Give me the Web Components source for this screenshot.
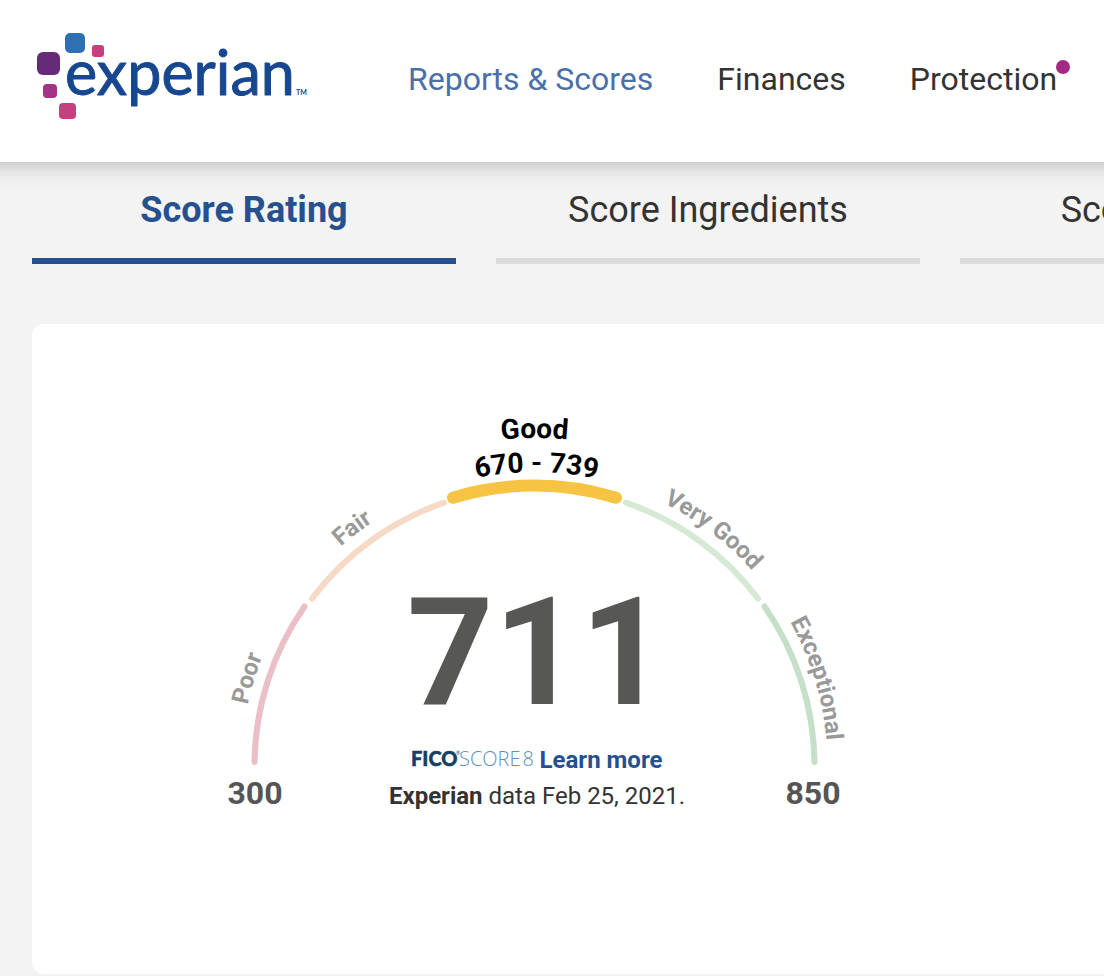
<!DOCTYPE html>
<html lang="en">
<head>
<meta charset="utf-8">
<meta name="viewport" content="width=device-width, initial-scale=1">
<title>Experian - Reports &amp; Scores</title>
<style>
  body {
    margin: 0;
    min-height: 100vh;
    overflow-x: hidden;
    background: #f3f3f3;
    color: #333;
    font-family: Roboto, "Liberation Sans", sans-serif;
  }
</style>
</head>
<body>
<site-header>
  <nav-link href="#reports" current>Reports &amp; Scores</nav-link>
  <nav-link href="#finances">Finances</nav-link>
  <nav-link href="#protection" alert>Protection</nav-link>
</site-header>
<main>
  <tab-strip>
    <tab-item selected>Score Rating</tab-item>
    <tab-item>Score Ingredients</tab-item>
    <tab-item>Score Planner</tab-item>
  </tab-strip>
  <score-card>
    <score-gauge score="711" min="300" max="850">
      <score-source><b>Experian</b> data Feb 25, 2021.</score-source>
    </score-gauge>
  </score-card>
</main>

<script>
class BrandLogo extends HTMLElement {
  constructor() {
    super();
    this.attachShadow({ mode: "open" });
  }

  connectedCallback() {
    this.shadowRoot.innerHTML = `
      <style>
        :host { display: block; flex: none; }
        a, svg { display: block; }
        text { font-family: Lato, "Liberation Sans", sans-serif; fill: #17478f; }
        .word { font-size: 61px; stroke: #17478f; stroke-width: 1; stroke-linejoin: round; }
        .tm { font-size: 7px; font-weight: bold; }
      </style>
      <a href="#home" aria-label="Experian home">
        <svg width="272" height="88" viewBox="0 0 272 88">
          <rect x="29" y="1" width="20" height="20" rx="5" fill="#2e70b4"/>
          <rect x="56" y="13" width="12" height="12" rx="3" fill="#c83f80"/>
          <rect x="1" y="20" width="23" height="23" rx="6" fill="#672a79"/>
          <rect x="7" y="52" width="14" height="14" rx="4" fill="#a33385"/>
          <rect x="23" y="71" width="17" height="16" rx="4" fill="#c83f80"/>
          <text class="word" x="29" y="63">experian</text>
          <text class="tm" x="260" y="63">TM</text>
        </svg>
      </a>
    `;
  }
}

class NavLink extends HTMLElement {
  constructor() {
    super();
    this.attachShadow({ mode: "open" });
  }

  connectedCallback() {
    this.shadowRoot.innerHTML = `
      <style>
        :host { display: block; position: relative; flex: none; }
        a { display: block; color: #333; font-size: 32px; line-height: 40px; text-decoration: none; white-space: nowrap; }
        :host([current]) a { color: #4a6fa9; }
        .dot {
          position: absolute;
          top: 1px;
          right: -13px;
          width: 14px;
          height: 14px;
          border-radius: 50%;
          background: #a22a82;
        }
        :host(:not([alert])) .dot { display: none; }
      </style>
      <a href="${this.getAttribute("href")}"><slot></slot></a>
      <span class="dot"></span>
    `;
  }
}

class SiteHeader extends HTMLElement {
  constructor() {
    super();
    this.attachShadow({ mode: "open" });
  }

  connectedCallback() {
    this.shadowRoot.innerHTML = `
      <style>
        :host { display: block; position: relative; }
        header {
          display: flex;
          gap: 100px;
          padding: 32px 36px 42px;
          background: #fff;
        }
        /* full-width shadow that does not fade at the sides */
        header::after {
          content: "";
          position: absolute;
          top: 100%;
          left: 0;
          right: 0;
          height: 28px;
          background: linear-gradient(rgba(0, 0, 0, .15), rgba(0, 0, 0, .06) 35%, rgba(0, 0, 0, .01) 75%, transparent);
          pointer-events: none;
        }
        nav { display: flex; gap: 64px; padding-top: 27px; }
      </style>
      <header>
        <brand-logo></brand-logo>
        <nav><slot></slot></nav>
      </header>
    `;
  }
}

class TabItem extends HTMLElement {
  constructor() {
    super();
    this.attachShadow({ mode: "open" });
  }

  connectedCallback() {
    this.shadowRoot.innerHTML = `
      <style>
        :host { display: block; flex: 0 0 424px; }
        button {
          width: 100%;
          padding: 24px 0;
          border: 0;
          border-bottom: 6px solid #dcdcdc;
          background: none;
          color: #333;
          font: 36px/48px Roboto, "Liberation Sans", sans-serif;
        }
        :host([selected]) button { border-color: #26508f; color: #26508f; font-weight: bold; }
      </style>
      <button role="tab" aria-selected="${this.hasAttribute("selected")}"><slot></slot></button>
    `;
  }
}

class TabStrip extends HTMLElement {
  constructor() {
    super();
    this.attachShadow({ mode: "open" });
  }

  connectedCallback() {
    this.shadowRoot.innerHTML = `
      <style>
        :host { display: block; }
        div { display: flex; gap: 40px; padding-left: 32px; overflow: hidden; }
      </style>
      <div role="tablist"><slot></slot></div>
    `;
  }
}

class ScoreCard extends HTMLElement {
  constructor() {
    super();
    this.attachShadow({ mode: "open" });
  }

  connectedCallback() {
    this.shadowRoot.innerHTML = `
      <style>
        :host { display: block; margin: 60px 0 0 32px; }
        section {
          display: flex;
          justify-content: center;
          padding: 80px 67px 150px 0;
          border-radius: 12px 0 0 12px;
          background: #fff;
        }
      </style>
      <section><slot></slot></section>
    `;
  }
}

class FicoMark extends HTMLElement {
  constructor() {
    super();
    this.attachShadow({ mode: "open" });
  }

  connectedCallback() {
    this.shadowRoot.innerHTML = `
      <style>
        :host { display: block; }
        svg { display: block; }
        .fico { font: 900 20px Lato, sans-serif; fill: #173f5f; stroke: #173f5f; stroke-width: .5; }
        .score { font: 300 20px "Open Sans", sans-serif; fill: #5f8fbd; }
        .reg { font: 5px Lato, sans-serif; fill: #173f5f; }
      </style>
      <svg width="124" height="32" viewBox="0 0 124 32">
        <text class="fico" x="-1" y="22">FICO</text>
        <text class="reg" x="44" y="11">®</text>
        <text class="score" x="47" y="22">SCORE<tspan dx="2">8</tspan></text>
      </svg>
    `;
  }
}

class ScoreSource extends HTMLElement {
  constructor() {
    super();
    this.attachShadow({ mode: "open" });
  }

  connectedCallback() {
    this.shadowRoot.innerHTML = `
      <style>
        :host { display: block; font-size: 24px; line-height: 36px; white-space: nowrap; }
      </style>
      <slot></slot>
    `;
  }
}

class ScoreGauge extends HTMLElement {
  constructor() {
    super();
    this.attachShadow({ mode: "open" });
  }

  connectedCallback() {
    this.shadowRoot.innerHTML = `
      <style>
        :host { display: grid; justify-items: center; }
        svg, .reading { grid-area: 1 / 1; }
        svg { display: block; }
        .band { fill: none; stroke-width: 6; stroke-linecap: round; }
        .band.active { stroke-width: 12; }
        text { font-weight: bold; text-anchor: middle; }
        .label { font-size: 24px; fill: #999; }
        .current { font-size: 28px; fill: #000; }
        .limit { font-size: 32px; fill: #555; }
        .reading {
          display: flex;
          flex-direction: column;
          align-items: center;
          align-self: end;
          padding: 0 0 10px 5px;
        }
        .score { margin-bottom: 13px; color: #575756; font-size: 151px; font-weight: bold; line-height: 152px; }
        .product { display: flex; align-items: center; gap: 4px; }
        .product a { color: #26508f; font-size: 24px; font-weight: bold; line-height: 36px; text-decoration: none; }
      </style>
      <svg width="641" height="420" viewBox="0 0 641 420">
        <defs>
          <path id="inner" d="M28.5 361A292 292 0 0 1 612.5 361"/>
          <path id="range" d="M27.5 361A293 293 0 0 1 613.5 361"/>
          <path id="outer" d="M-6.5 361A327 327 0 0 1 647.5 361"/>
        </defs>
        <path class="band" stroke="#ebbfc8" d="M40.5 358A280 280 0 0 1 90.5 202.5"/>
        <path class="band" stroke="#f7dac5" d="M98 194.5A278 278 0 0 1 230 98.7"/>
        <path class="band active" stroke="#f6c342" d="M239 93.7A280 280 0 0 1 402 93.7"/>
        <path class="band" stroke="#d5e9d4" d="M412 98.7A278 278 0 0 1 544 194.5"/>
        <path class="band" stroke="#c5dfc9" d="M550.5 202.5A280 280 0 0 1 600.5 358"/>
        <text class="label"><textPath href="#range" startOffset="86">Poor</textPath></text>
        <text class="label"><textPath href="#inner" startOffset="267">Fair</textPath></text>
        <text class="current"><textPath href="#outer" startOffset="50%">Good</textPath></text>
        <text class="current"><textPath href="#range" startOffset="462">670 - 739</textPath></text>
        <text class="label"><textPath href="#inner" startOffset="648">Very Good</textPath></text>
        <text class="label"><textPath href="#range" startOffset="833">Exceptional</textPath></text>
        <text class="limit" x="41" y="400">${this.getAttribute("min")}</text>
        <text class="limit" x="599" y="400">${this.getAttribute("max")}</text>
      </svg>
      <div class="reading">
        <div class="score">${this.getAttribute("score")}</div>
        <div class="product"><fico-mark></fico-mark><a href="#learn">Learn more</a></div>
        <slot></slot>
      </div>
    `;
  }
}

customElements.define("brand-logo", BrandLogo);
customElements.define("nav-link", NavLink);
customElements.define("site-header", SiteHeader);
customElements.define("tab-item", TabItem);
customElements.define("tab-strip", TabStrip);
customElements.define("score-card", ScoreCard);
customElements.define("fico-mark", FicoMark);
customElements.define("score-source", ScoreSource);
customElements.define("score-gauge", ScoreGauge);
</script>
</body>
</html>
